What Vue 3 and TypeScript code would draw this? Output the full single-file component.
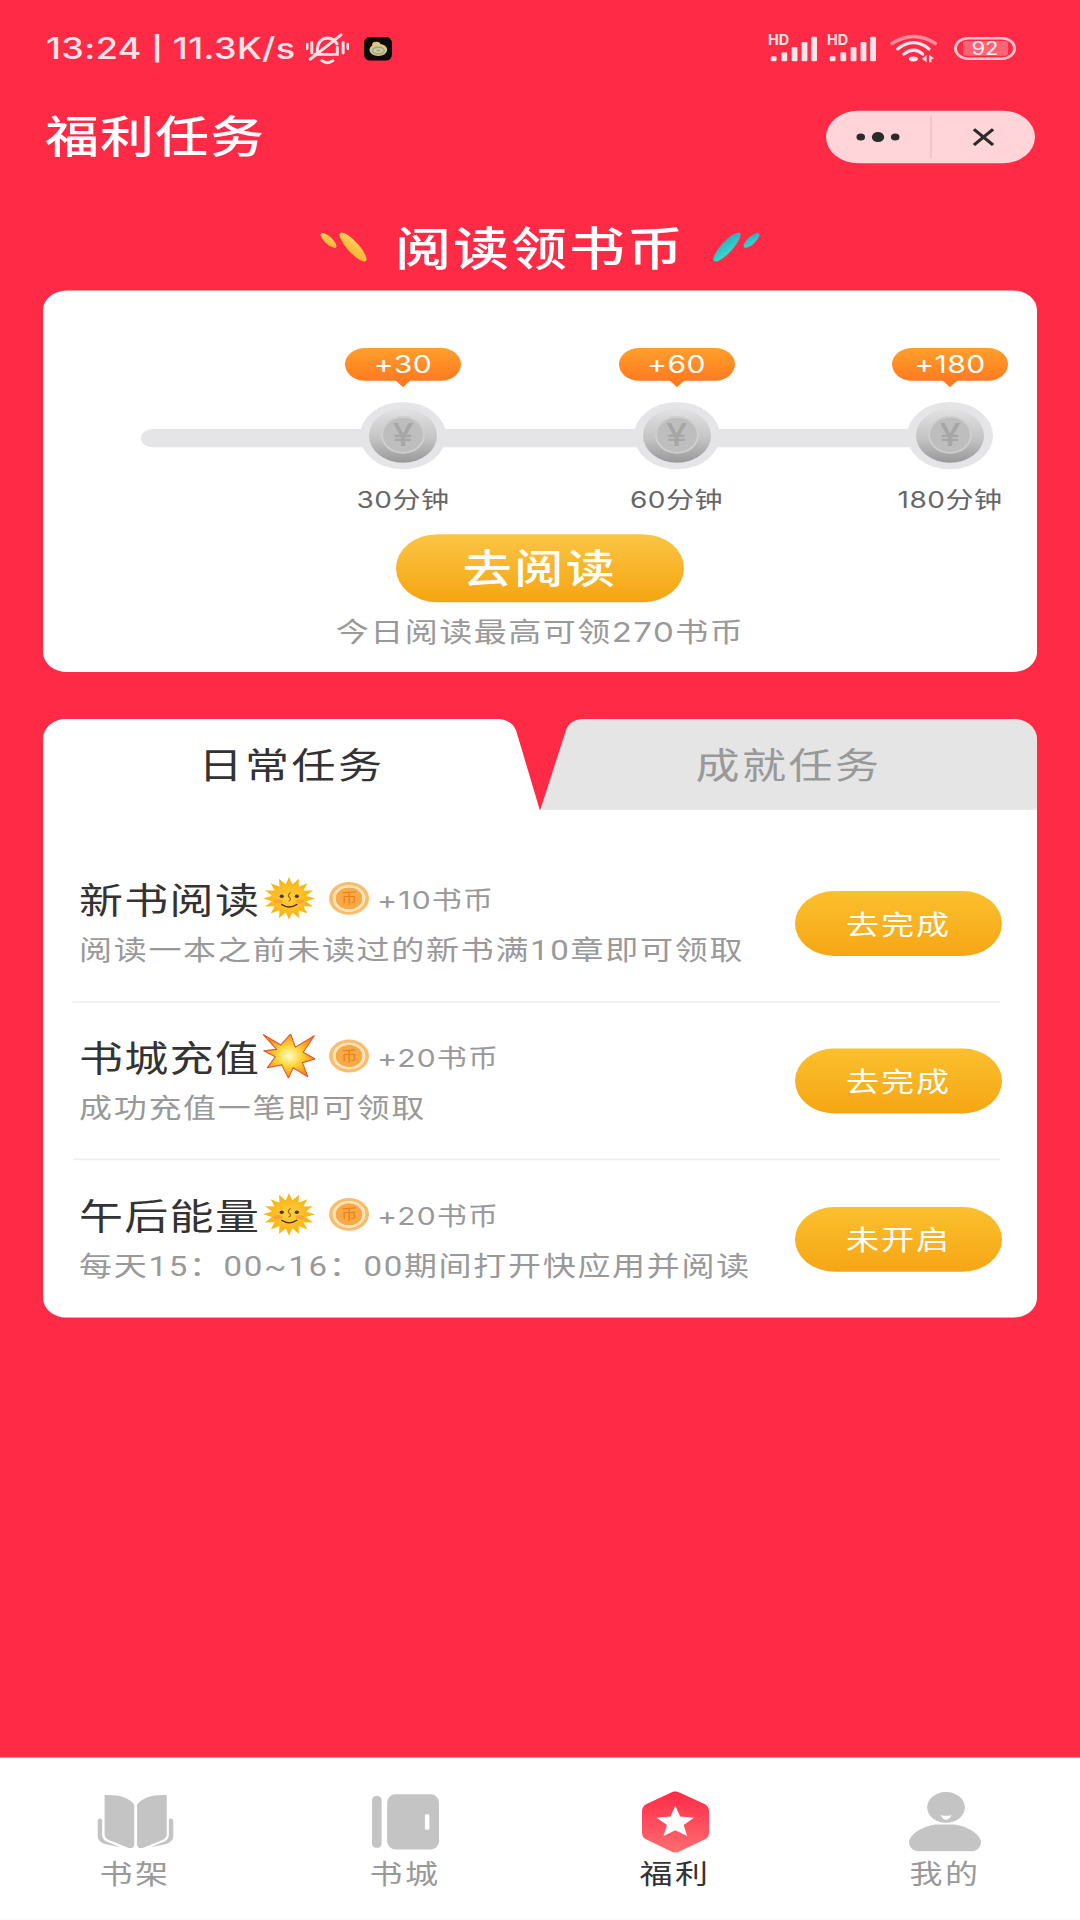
<script setup lang="ts">
interface Milestone {
  coins: string
  label: string
}

interface Task {
  title: string
  icon: 'sun' | 'boom'
  reward: string
  desc: string
  action: string
}

const milestones: Milestone[] = [
  { coins: '+30', label: '30分钟' },
  { coins: '+60', label: '60分钟' },
  { coins: '+180', label: '180分钟' },
]

const tasks: Task[] = [
  { title: '新书阅读', icon: 'sun', reward: '+10书币', desc: '阅读一本之前未读过的新书满10章即可领取', action: '去完成' },
  { title: '书城充值', icon: 'boom', reward: '+20书币', desc: '成功充值一笔即可领取', action: '去完成' },
  { title: '午后能量', icon: 'sun', reward: '+20书币', desc: '每天15：00~16：00期间打开快应用并阅读', action: '未开启' },
]

const navItems = [
  { key: 'shelf', label: '书架' },
  { key: 'store', label: '书城' },
  { key: 'gift', label: '福利' },
  { key: 'me', label: '我的' },
]

// spiky outline of the sun emoji
const sunPoints = Array.from({ length: 32 }, (_, i) => {
  const r = i % 2 === 0 ? 50 : 33
  const a = (i / 32) * Math.PI * 2 - Math.PI / 2
  return `${(50 + r * Math.cos(a)).toFixed(1)},${(50 + r * Math.sin(a)).toFixed(1)}`
}).join(' ')
</script>

<template>
  <div class="screen">
    <div class="stage">
      <div class="status">
        <div class="status-left">
          <span class="status-text">13:24 <span class="status-sep">|</span> 11.3K/s</span>
          <svg class="ic-bell" viewBox="0 0 125 92" preserveAspectRatio="none">
            <g fill="none" stroke="#ffe3e6" stroke-width="8.5" stroke-linecap="round">
              <path d="M3 33v12M17 28v30M108 28v30M122 33v12" />
              <path d="M33 62V46Q36 17 62 15Q82 16 90 32M91 42V62H26M46 80Q62 92 78 80" />
              <path d="M12 76L102 6" />
            </g>
          </svg>
          <svg class="ic-app" viewBox="0 0 82 70" preserveAspectRatio="none">
            <rect width="82" height="70" rx="18" fill="#0d0b08" />
            <ellipse cx="42" cy="38" rx="26" ry="18" fill="#e5c678" />
            <ellipse cx="36" cy="22" rx="12" ry="8" fill="#e5c678" />
            <ellipse cx="42" cy="40" rx="17" ry="10" fill="none" stroke="#86aeb2" stroke-width="5" />
            <ellipse cx="42" cy="40" rx="6" ry="3" fill="#86aeb2" />
          </svg>
        </div>
        <div class="status-right">
          <svg v-for="n in 2" :key="n" class="ic-signal" viewBox="0 -14 143 94" preserveAspectRatio="none">
            <text x="0" y="28" class="hd">HD</text>
            <g fill="#ffe3e6">
              <rect x="8" y="62" width="17" height="15" rx="4" />
              <rect x="39" y="50" width="17" height="27" rx="4" />
              <rect x="69" y="35" width="17" height="42" rx="4" />
              <rect x="98" y="20" width="17" height="57" rx="4" />
              <rect x="126" y="5" width="17" height="72" rx="4" />
            </g>
          </svg>
          <svg class="ic-wifi" viewBox="0 0 135 85" preserveAspectRatio="none">
            <g fill="none" stroke-linecap="round">
              <path d="M6 28Q68 -12 130 28" stroke="#ff8f9c" stroke-width="10" />
              <path d="M22 44Q68 8 112 44" stroke="#ffe8ea" stroke-width="9" />
              <path d="M40 59Q68 36 94 59" stroke="#ffe8ea" stroke-width="9" />
            </g>
            <ellipse cx="67" cy="73" rx="13" ry="7" fill="#ffe8ea" />
            <path d="M92 72l13-10v20zM112 60l15 12h-8v10h-7z" fill="#ffe8ea" />
          </svg>
          <div class="battery">
            <div class="battery-fill"></div>
            <span class="battery-num">92</span>
          </div>
        </div>
      </div>

      <div class="header">
        <h1 class="page-title">福利任务</h1>
        <div class="capsule">
          <div class="capsule-btn">
            <svg class="ic-dots" viewBox="0 0 46 14">
              <circle cx="5" cy="7" r="4.5" fill="#2b2b2b" />
              <circle cx="23" cy="7" r="6.5" fill="#2b2b2b" />
              <circle cx="41" cy="7" r="4.5" fill="#2b2b2b" />
            </svg>
          </div>
          <div class="capsule-btn capsule-close">
            <svg class="ic-close" viewBox="0 0 24 24">
              <path d="M2 2L22 22M22 2L2 22" stroke="#2b2b2b" stroke-width="3.6" fill="none" />
            </svg>
          </div>
        </div>
      </div>

      <div class="section-head">
        <svg class="leaf" viewBox="0 0 46 40" preserveAspectRatio="none">
          <defs>
            <linearGradient id="leafY" x1="0" y1="0" x2="1" y2="1">
              <stop offset="0" stop-color="#ffd65a" />
              <stop offset="1" stop-color="#f9ae2e" />
            </linearGradient>
            <linearGradient id="leafT" x1="1" y1="0" x2="0" y2="1">
              <stop offset="0" stop-color="#2aa7c4" />
              <stop offset="1" stop-color="#3fe0cc" />
            </linearGradient>
          </defs>
          <ellipse cx="8" cy="12" rx="11" ry="4" transform="rotate(52 8 12)" fill="url(#leafY)" />
          <ellipse cx="31" cy="20" rx="21" ry="5.8" transform="rotate(56 31 20)" fill="url(#leafY)" />
        </svg>
        <h2 class="section-title">阅读领书币</h2>
        <svg class="leaf" viewBox="0 0 46 40" preserveAspectRatio="none">
          <ellipse cx="15" cy="20" rx="21" ry="5.8" transform="rotate(-56 15 20)" fill="url(#leafT)" />
          <ellipse cx="38" cy="12" rx="11" ry="4" transform="rotate(-52 38 12)" fill="url(#leafT)" />
        </svg>
      </div>

      <section class="card read-card">
        <div class="timeline">
          <div class="track"></div>
          <div v-for="m in milestones" :key="m.label" class="node">
            <div class="bubble">{{ m.coins }}</div>
            <div class="ring">
              <div class="silver">
                <div class="silver-inner">¥</div>
              </div>
            </div>
            <div class="node-label">{{ m.label }}</div>
          </div>
        </div>
        <button class="read-btn">去阅读</button>
        <p class="read-tip">今日阅读最高可领270书币</p>
      </section>

      <section class="task-card">
        <div class="tabs">
          <div class="tab tab-on">日常任务</div>
          <div class="tab tab-off">成就任务</div>
        </div>
        <div class="task-list">
          <div v-for="t in tasks" :key="t.title" class="task">
            <div class="task-info">
              <div class="task-head">
                <span class="task-title">{{ t.title }}</span>
                <svg v-if="t.icon === 'sun'" class="emoji" viewBox="0 0 100 100">
                  <defs>
                    <radialGradient id="sunFace">
                      <stop offset="0" stop-color="#ffd23f" />
                      <stop offset="1" stop-color="#fdb81f" />
                    </radialGradient>
                  </defs>
                  <polygon :points="sunPoints" fill="#feb70f" />
                  <circle cx="50" cy="50" r="34" fill="url(#sunFace)" />
                  <ellipse cx="29" cy="57" rx="8" ry="5" fill="#f59a35" opacity="0.7" />
                  <ellipse cx="71" cy="57" rx="8" ry="5" fill="#f59a35" opacity="0.7" />
                  <circle cx="36" cy="45" r="4" fill="#4a3420" />
                  <circle cx="65" cy="45" r="4" fill="#4a3420" />
                  <path d="M53 36Q45 44 52 49Q55 54 49 56" fill="none" stroke="#a8641c" stroke-width="2.4" />
                  <path d="M36 64Q50 76 65 64" fill="none" stroke="#4a3420" stroke-width="3" stroke-linecap="round" />
                </svg>
                <svg v-else class="emoji" viewBox="0 0 145 120" preserveAspectRatio="none">
                  <defs>
                    <radialGradient id="boomCore">
                      <stop offset="0" stop-color="#fffbd0" />
                      <stop offset="0.45" stop-color="#ffd83a" />
                      <stop offset="1" stop-color="#f98a1c" />
                    </radialGradient>
                  </defs>
                  <polygon
                    points="0,2 50,30 77,0 90,36 143,5 112,50 145,68 110,78 125,116 84,92 71,120 52,84 12,92 34,62 2,46 38,42"
                    fill="url(#boomCore)"
                    stroke="#e2552a"
                    stroke-width="3"
                    stroke-linejoin="round"
                  />
                </svg>
                <span class="coin"><span class="coin-inner">币</span></span>
                <span class="task-reward">{{ t.reward }}</span>
              </div>
              <p class="task-desc">{{ t.desc }}</p>
            </div>
            <button class="task-btn">{{ t.action }}</button>
          </div>
        </div>
      </section>

      <nav class="tabbar">
        <div v-for="item in navItems" :key="item.key" class="nav-item" :class="{ active: item.key === 'gift' }">
          <div class="nav-icon">
            <svg v-if="item.key === 'shelf'" class="ic-shelf" viewBox="0 0 223 158" preserveAspectRatio="none">
              <g fill="#c4c4c4">
                <path d="M23 2C60 0 92 8 108 30V146Q106 160 92 156L36 134Q22 128 22 116V6Q22 2 23 2Z" />
                <path d="M201 2C164 0 132 8 116 30V146Q118 160 132 156L188 134Q202 128 202 116V6Q202 2 201 2Z" />
                <path d="M2 78Q2 70 10 70Q15 70 15 76V118Q15 132 30 138L68 154L28 146Q2 140 2 122Z" />
                <path d="M221 78Q221 70 213 70Q208 70 208 76V118Q208 132 193 138L155 154L195 146Q221 140 221 122Z" />
              </g>
            </svg>
            <svg v-else-if="item.key === 'store'" class="ic-store" viewBox="0 0 195 164" preserveAspectRatio="none">
              <rect x="0" y="7" width="28" height="150" rx="12" fill="#c4c4c4" />
              <rect x="44" y="2" width="151" height="160" rx="24" fill="#c4c4c4" />
              <rect x="154" y="60" width="13" height="45" rx="4" fill="#fff" />
            </svg>
            <svg v-else-if="item.key === 'gift'" class="ic-gift" viewBox="0 0 193 178" preserveAspectRatio="none">
              <defs>
                <linearGradient id="giftFill" x1="0" y1="0" x2="0" y2="1">
                  <stop offset="0" stop-color="#ff2a46" />
                  <stop offset="1" stop-color="#ff6d72" />
                </linearGradient>
              </defs>
              <path
                d="M86 3Q96 -2 106 3L180 37Q193 44 193 58V120Q193 134 180 140L106 175Q96 180 86 175L13 140Q0 134 0 120V58Q0 44 13 37Z"
                fill="url(#giftFill)"
              />
              <polygon points="96,42 110,73 150,77 120,98 130,130 96,113 62,130 72,98 42,77 82,73" fill="#fff" />
            </svg>
            <svg v-else class="ic-me" viewBox="0 0 210 175" preserveAspectRatio="none">
              <ellipse cx="108" cy="45" rx="55" ry="45" fill="#c4c4c4" />
              <path d="M92 67Q108 72 124 67Q118 81 108 81Q98 81 92 67Z" fill="#fff" />
              <path
                d="M0 146C0 125 45 95 85 95H125C165 95 210 125 210 146C210 162 196 173 184 173H26C14 173 0 162 0 146Z"
                fill="#c4c4c4"
              />
            </svg>
          </div>
          <span class="nav-label">{{ item.label }}</span>
        </div>
      </nav>
    </div>
  </div>
</template>

<style>
html,
body {
  margin: 0;
  background: #ff2a46;
}
</style>

<style scoped>
.screen {
  width: 1080px;
  height: 1920px;
  overflow: hidden;
  font-family: Inter, 'Noto Sans CJK SC', sans-serif;
}

/* the screen was captured at 2340 tall and squeezed to 1920 */
.stage {
  width: 1080px;
  height: 2340px;
  transform: scaleY(0.8205);
  transform-origin: top left;
  background: #ff2a46;
  display: flex;
  flex-direction: column;
}

.status {
  height: 134px;
  flex: none;
  padding: 34px 64px 50px 46px;
  box-sizing: border-box;
  display: flex;
  justify-content: space-between;
  align-items: center;
}

.status-left,
.status-right {
  display: flex;
  align-items: center;
}

.status-text {
  font-size: 36px;
  font-weight: 500;
  color: #ffe3e6;
  letter-spacing: 0.4px;
  white-space: nowrap;
}

.status-sep {
  font-size: 29px;
  font-weight: 700;
  vertical-align: 2px;
}

.ic-bell {
  width: 43px;
  height: 39px;
  margin-left: 10px;
}

.ic-app {
  width: 28px;
  height: 29px;
  margin-left: 15px;
}

.ic-signal {
  width: 49px;
  height: 39px;
  margin-right: 10px;
  margin-top: -5px;
}

.hd {
  font-size: 42px;
  font-weight: 700;
  fill: #ffe3e6;
}

.ic-wifi {
  width: 47px;
  height: 36px;
  margin: 0 17px 0 4px;
}

.battery {
  position: relative;
  width: 62px;
  height: 28px;
  box-sizing: border-box;
  border: 3px solid #ffc4cb;
  border-radius: 14px;
  display: flex;
  align-items: center;
  justify-content: center;
}

.battery-fill {
  position: absolute;
  left: 6px;
  right: 5px;
  top: 2px;
  bottom: 2px;
  background: #ff6476;
  border-radius: 3px;
}

.battery-num {
  position: relative;
  font-size: 22px;
  line-height: 1;
  color: #ffeef0;
}

.header {
  height: 66px;
  flex: none;
  padding: 0 45px;
  display: flex;
  justify-content: space-between;
  align-items: center;
}

.page-title {
  margin: 0;
  padding-bottom: 7px;
  font-size: 54px;
  font-weight: 500;
  color: #fff;
  letter-spacing: 1px;
}

.capsule {
  width: 209px;
  height: 64px;
  box-sizing: border-box;
  border-radius: 32px;
  background: #ffd5d9;
  display: flex;
  align-items: center;
}

.capsule-btn {
  flex: 1;
  display: flex;
  justify-content: center;
  align-items: center;
}

.capsule-close {
  height: 52px;
  border-left: 2px solid #f5c4c9;
}

.ic-dots {
  width: 44px;
  height: 16px;
}

.ic-close {
  width: 23px;
  height: 24px;
}

.section-head {
  height: 60px;
  flex: none;
  margin-top: 71px;
  display: flex;
  justify-content: center;
  align-items: center;
  gap: 26px;
}

.leaf {
  width: 49px;
  height: 40px;
}

.section-title {
  margin: 0;
  padding-bottom: 5px;
  font-size: 56px;
  font-weight: 500;
  color: #fff;
  letter-spacing: 2px;
}

.card {
  margin: 23px 43px 0;
  background: #fff;
  border-radius: 24px;
}

.read-card {
  height: 465px;
  flex: none;
  box-sizing: border-box;
  padding-top: 70px;
  display: flex;
  flex-direction: column;
  align-items: center;
}

.timeline {
  position: relative;
  align-self: stretch;
  display: flex;
  padding-left: 290px;
  gap: 133.5px;
}

.track {
  position: absolute;
  left: 98px;
  right: 87px;
  top: 99px;
  height: 22px;
  border-radius: 11px;
  background: #e5e4e7;
}

.node {
  position: relative;
  width: 140px;
  display: flex;
  flex-direction: column;
  align-items: center;
}

.bubble {
  position: relative;
  width: 116px;
  height: 40px;
  border-radius: 20px;
  background: linear-gradient(#ffa02c, #ff7a20);
  color: #fff;
  font-size: 30px;
  line-height: 40px;
  text-align: center;
  letter-spacing: 0.5px;
}

.bubble::after {
  content: '';
  position: absolute;
  left: 50%;
  top: 38px;
  margin-left: -9px;
  border: 9px solid transparent;
  border-top: 10px solid #ff7a20;
  border-bottom: 0;
}

.ring {
  width: 86px;
  height: 82px;
  margin-top: 26px;
  border-radius: 50%;
  background: #e5e4e7;
  display: flex;
  justify-content: center;
  align-items: center;
}

.silver {
  width: 68px;
  height: 66px;
  border-radius: 50%;
  background: linear-gradient(#e2e2e2, #c4c4c4 55%, #989898);
  display: flex;
  justify-content: center;
  align-items: center;
}

.silver-inner {
  width: 40px;
  height: 42px;
  margin-top: -3px;
  border: 2px solid #cfcfcf;
  border-radius: 50%;
  background: #bebebe;
  color: #a6a6a6;
  font-size: 38px;
  font-weight: 500;
  line-height: 42px;
  text-align: center;
}

.node-label {
  margin-top: 19px;
  font-size: 28px;
  line-height: 36px;
  color: #666;
  letter-spacing: 0.5px;
  white-space: nowrap;
}

.read-btn {
  width: 288px;
  height: 83px;
  margin-top: 24px;
  padding: 0 0 6px;
  border: none;
  border-radius: 42px;
  background: linear-gradient(#fbc544, #f5a512);
  color: #fff;
  font-family: inherit;
  font-size: 49px;
  font-weight: 500;
  letter-spacing: 2.5px;
}

.read-tip {
  margin: 16px 0 0;
  font-size: 33px;
  line-height: 40px;
  color: #999;
  letter-spacing: 1.5px;
}

.task-card {
  height: 730px;
  flex: none;
  margin: 57px 43px 0;
  border-radius: 24px;
  overflow: hidden;
  display: flex;
  flex-direction: column;
}

.tabs {
  height: 112px;
  flex: none;
  display: flex;
}

.tab {
  flex: 1;
  box-sizing: border-box;
  padding-top: 3px;
  text-align: center;
  line-height: 108px;
  font-size: 44px;
  letter-spacing: 2.5px;
}

.tab-on {
  color: #333;
  background: #fff;
  clip-path: path('M0 112V0H452Q468 0 473 14L497 112Z');
}

.tab-off {
  color: #999;
  background: #e5e5e5;
  clip-path: path('M0 112L26 14Q30 0 46 0H497V112Z');
}

.task-list {
  flex: 1;
  position: relative;
  margin-top: -1px;
  padding-top: 43px;
  background: #fff;
}

.task {
  height: 192px;
  box-sizing: border-box;
  margin: 0 37px 0 30px;
  padding-left: 6px;
  display: flex;
  justify-content: space-between;
  align-items: center;
  border-bottom: 2px solid #eeeff3;
}

.task:last-child {
  border-bottom: none;
}

.task-info {
  min-width: 0;
  margin-bottom: 5px;
}

.task-head {
  height: 60px;
  display: flex;
  align-items: center;
}

.task-title {
  font-size: 44px;
  color: #333;
  letter-spacing: 1.3px;
}

.emoji {
  width: 52px;
  height: 54px;
  margin-left: 3px;
}

.coin {
  width: 40px;
  height: 40px;
  margin: 0 8px 0 14px;
  border-radius: 50%;
  background: radial-gradient(circle at 50% 50%, #f9a945 0 46%, #ffe3b8 48% 57%, #f9bd6e 59%);
  display: flex;
  justify-content: center;
  align-items: center;
}

.coin-inner {
  font-size: 16px;
  line-height: 1;
  color: #ef7f12;
}

.task-reward {
  font-size: 30px;
  color: #999;
  letter-spacing: 1.2px;
}

.task-desc {
  margin: 12px 0 0;
  font-family: Roboto, 'Noto Sans CJK SC', sans-serif;
  font-size: 33px;
  line-height: 44px;
  color: #999;
  letter-spacing: 1.7px;
  white-space: nowrap;
}

.task-btn {
  width: 207px;
  height: 79px;
  flex: none;
  margin-right: -2px;
  padding: 0;
  border: none;
  border-radius: 40px;
  background: linear-gradient(#fbc02e, #f6a615);
  color: #fff;
  font-family: inherit;
  font-size: 33px;
  letter-spacing: 2px;
}

.tabbar {
  margin-top: auto;
  height: 198px;
  flex: none;
  box-sizing: border-box;
  padding-top: 40px;
  background: #fff;
  display: grid;
  grid-template-columns: repeat(4, 1fr);
}

.nav-item {
  display: flex;
  flex-direction: column;
  align-items: center;
}

.nav-icon {
  height: 76px;
  display: flex;
  align-items: center;
  justify-content: center;
}

.ic-shelf {
  width: 77px;
  height: 66px;
}

.ic-store {
  width: 67px;
  height: 69px;
}

.ic-gift {
  width: 67px;
  height: 75px;
}

.ic-me {
  width: 72px;
  height: 73px;
}

.nav-label {
  margin-top: 4px;
  font-size: 33px;
  line-height: 44px;
  color: #999;
  letter-spacing: 2.5px;
}

.nav-item.active .nav-label {
  color: #333;
}
</style>
